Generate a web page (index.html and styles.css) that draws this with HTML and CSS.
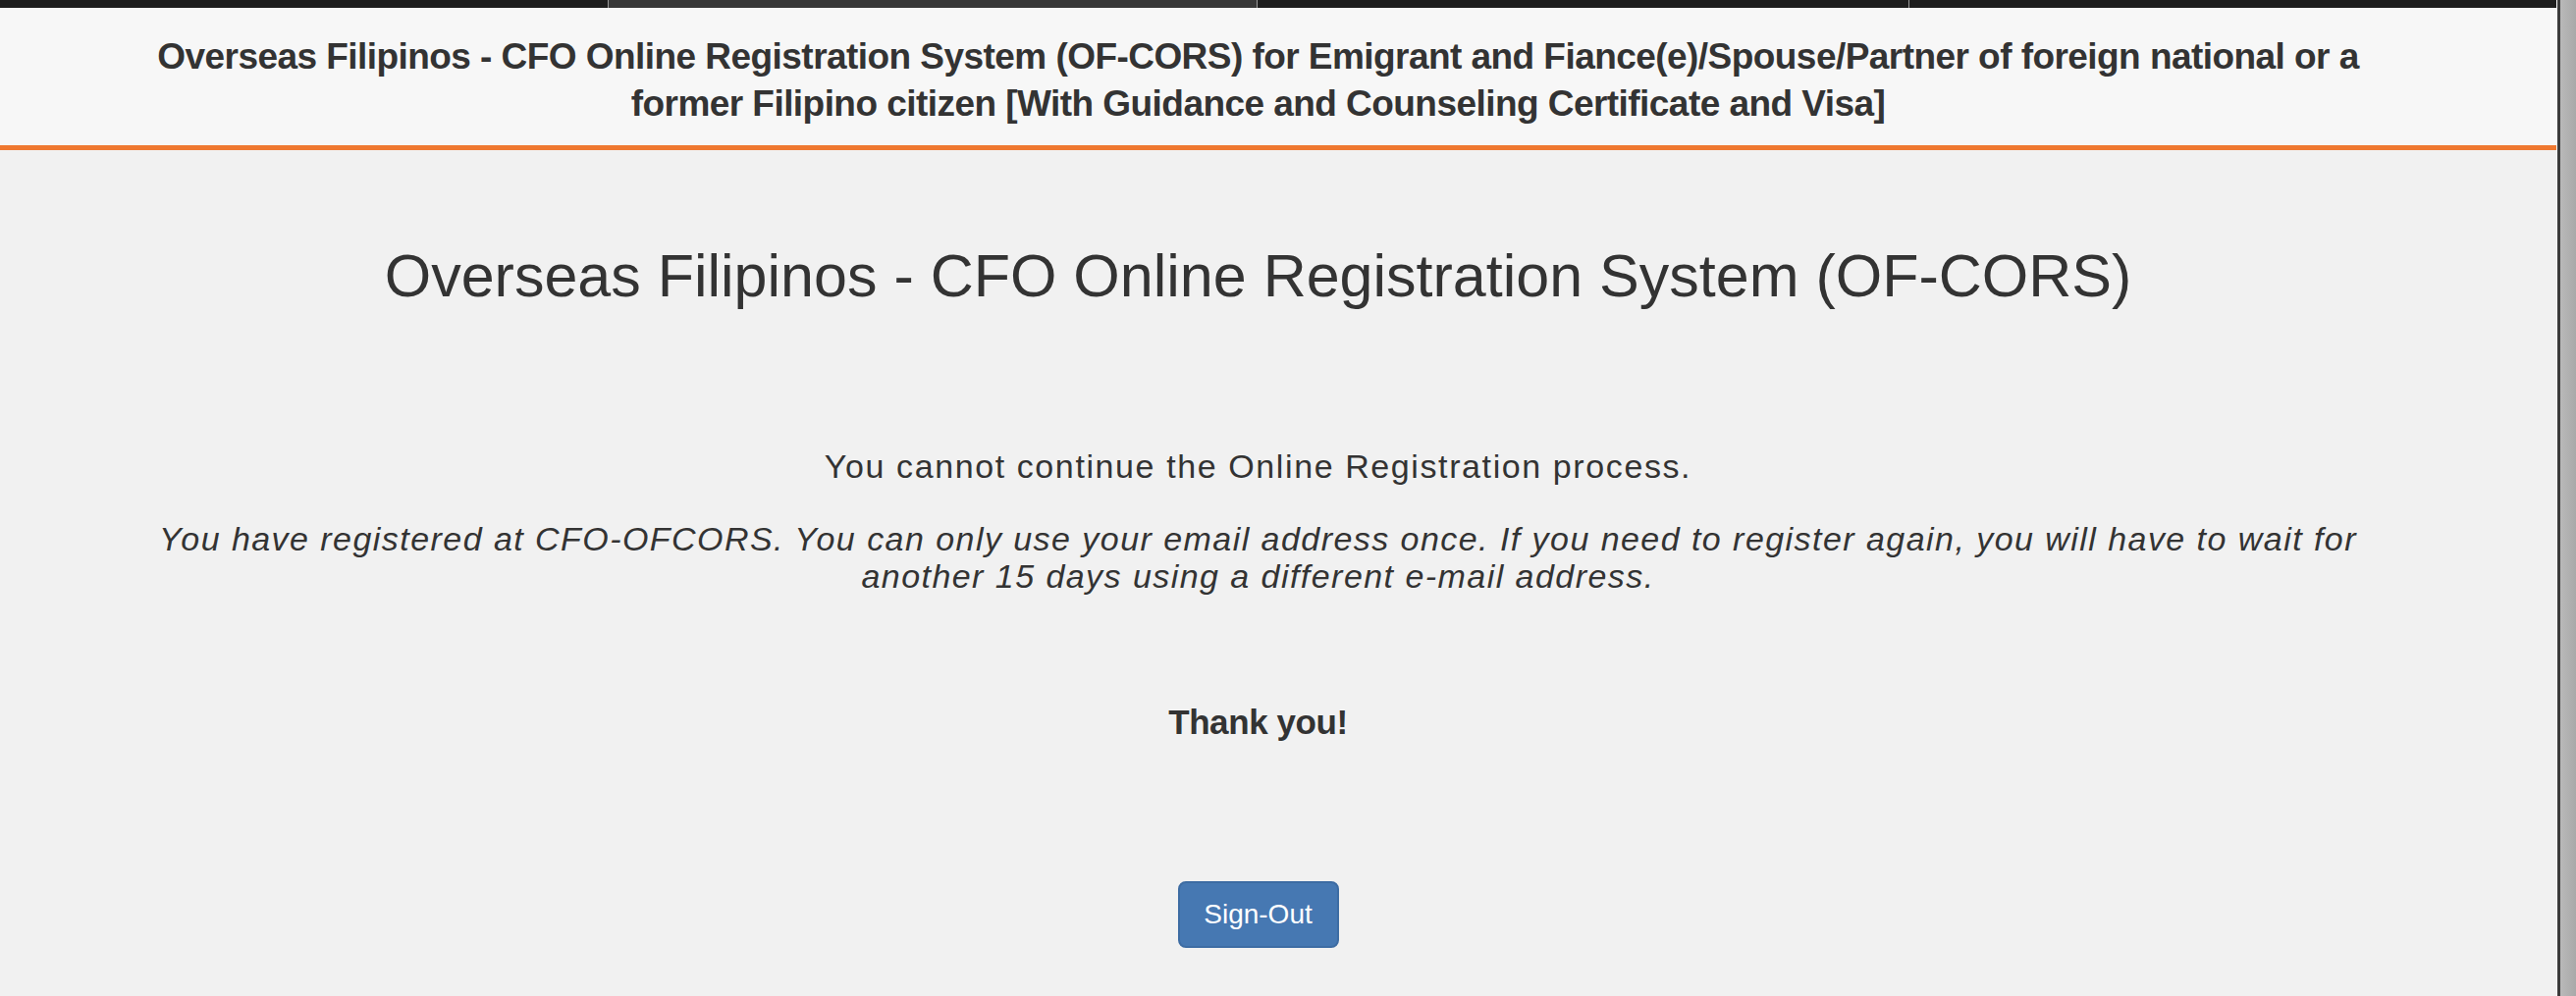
FILE: index.html
```html
<!DOCTYPE html>
<html lang="en">
<head>
<meta charset="utf-8">
<title>OF-CORS</title>
<link rel="stylesheet" href="styles.css">
</head>
<body>
<div class="window">
  <div class="page">
    <div class="tabs">
      <div class="tab"></div>
      <div class="tab tab-active"></div>
      <div class="tab"></div>
      <div class="tab"></div>
    </div>
    <header class="banner">
      <h1 class="banner-title">Overseas Filipinos - CFO Online Registration System (OF-CORS) for Emigrant and Fiance(e)/Spouse/Partner of foreign national or a former Filipino citizen [With Guidance and Counseling Certificate and Visa]</h1>
    </header>
    <main class="content">
      <h2 class="title">Overseas Filipinos - CFO Online Registration System (OF-CORS)</h2>
      <p class="lead">You cannot continue the Online Registration process.</p>
      <p class="note"><em>You have registered at CFO-OFCORS. You can only use your email address once. If you need to register again, you will have to wait for another 15 days using a different e-mail address.</em></p>
      <h4 class="thanks">Thank you!</h4>
      <div class="actions"><button class="btn" type="button">Sign-Out</button></div>
    </main>
  </div>
  <div class="edge"></div>
</div>
</body>
</html>
```
FILE: styles.css
```css
* { box-sizing: border-box; }
html, body { margin: 0; padding: 0; height: 100%; }
body {
  font-family: "Liberation Sans", Arial, sans-serif;
  color: #333;
  background: #f1f1f1;
}
.window {
  display: flex;
  height: 1015px;
  overflow: hidden;
}
.page {
  flex: 0 0 2605px;
  display: flex;
  flex-direction: column;
  background: #f1f1f1;
  border-right: 1px solid #fafafa;
}
.edge {
  flex: 1;
  border-left: 3px solid #3b3b3b;
  background: linear-gradient(90deg, #b9b9b9, #a9a9a9);
}
.tabs {
  display: flex;
  height: 8px;
  background: #1e1e1e;
}
.tab { width: 620px; background: #1e1e1e; border-right: 1px solid #9a9a9a; }
.tab:nth-child(2) { width: 661px; }
.tab:nth-child(3) { width: 664px; }
.tab:last-child { flex: 1; border-right: none; }
.tab-active { background: #383838; }
.banner {
  background: #f7f7f7;
  border-bottom: 5px solid #ef7830;
  padding: 26px 41px 18px 0;
  display: flex;
  justify-content: center;
}
.banner-title {
  margin: 0;
  width: 2300px;
  text-align: center;
  font-size: 37px;
  line-height: 48px;
  letter-spacing: -0.55px;
  font-weight: 700;
}
.content {
  padding: 0 41px 0 0;
  display: flex;
  flex-direction: column;
  align-items: center;
  text-align: center;
}
.title {
  margin: 95px 0 0;
  font-size: 61px;
  line-height: 66px;
  font-weight: 400;
}
.lead {
  margin: 141px 0 0;
  font-size: 34px;
  line-height: 40px;
  letter-spacing: 1.6px;
}
.note {
  margin: 35px 0 0;
  width: 2300px;
  font-size: 34px;
  line-height: 38px;
  letter-spacing: 1.45px;
}
.thanks {
  margin: 110px 0 0;
  font-size: 35px;
  line-height: 40px;
  letter-spacing: -0.4px;
  font-weight: 700;
}
.actions { margin-top: 142px; }
.btn {
  font-family: "Liberation Sans", Arial, sans-serif;
  font-size: 28px;
  line-height: 40px;
  color: #fff;
  background: #4678b2;
  border: 2px solid #3d6ca3;
  border-radius: 8px;
  padding: 12px 24px;
  width: 164px;
  height: 68px;
}
```
